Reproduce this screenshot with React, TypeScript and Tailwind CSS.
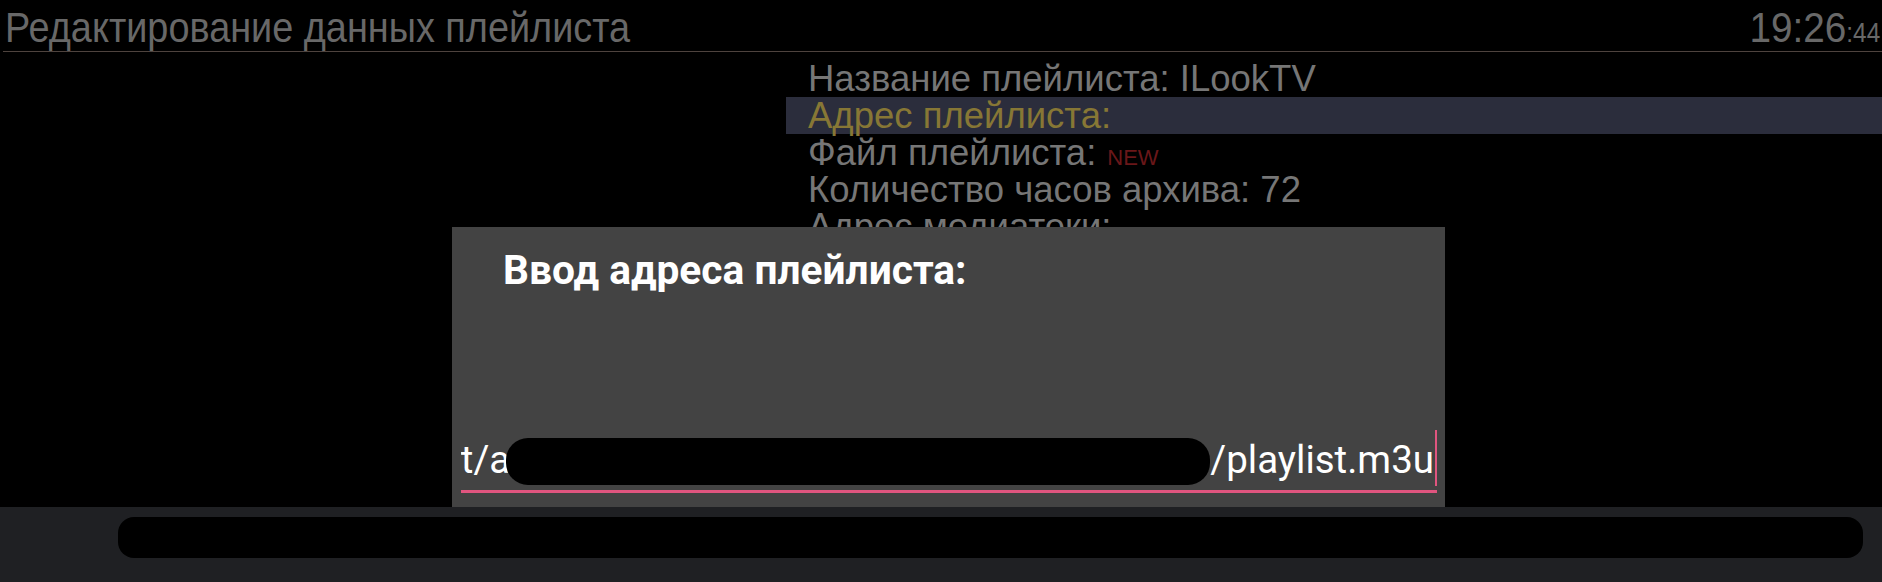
const narrow = "font-['Liberation_Sans_Narrow','Arial_Narrow','Liberation_Sans',sans-serif]";

const rows = [
  { label: 'Название плейлиста: ILookTV' },
  { label: 'Адрес плейлиста:', active: true },
  { label: 'Файл плейлиста:', badge: 'NEW' },
  { label: 'Количество часов архива: 72' },
  { label: 'Адрес медиатеки:' },
  { label: 'Часовой пояс: 0' },
  { label: 'Удалить плейлист' },
];

export default function App() {
  return (
    <div className="relative w-[1882px] h-[582px] overflow-hidden bg-black flex flex-col">
      {/* шапка */}
      <header className={`h-[52px] shrink-0 ml-[3px] flex justify-between border-b border-[#4e433e] pt-[4px] ${narrow}`}>
        <h1 className="pl-[2px] text-[43px] leading-[46px] text-[#686868] whitespace-nowrap">
          <span className="inline-block origin-left scale-x-[0.88]">Редактирование данных плейлиста</span>
        </h1>
        <div className="pr-[2px] text-[#686868] whitespace-nowrap">
          <div className="flex items-baseline origin-right scale-x-[0.9]">
            <span className="text-[43px] leading-[46px]">19:26</span>
            <span className="text-[27px] leading-[46px]">:44</span>
          </div>
        </div>
      </header>

      {/* список полей */}
      <ul className={`flex-1 min-h-0 overflow-hidden pt-[8px] ml-[786px] ${narrow}`}>
        {rows.map(r => (
          <li
            key={r.label}
            className={`h-[37px] pl-[22px] flex items-baseline gap-[11px] text-[36.5px] leading-[37px] whitespace-nowrap ${
              r.active ? 'bg-[#2b2d3c] text-[#877735]' : 'text-[#767676]'
            }`}
          >
            <span>{r.label}</span>
            {r.badge && <span className="text-[22px] text-[#6a1719]">{r.badge}</span>}
          </li>
        ))}
      </ul>

      {/* нижняя панель */}
      <div className="h-[75px] shrink-0 bg-[#1f2023] pt-[10px]">
        <div className="ml-[118px] w-[1745px] h-[41px] rounded-[16px] bg-black" />
      </div>

      {/* диалог ввода */}
      <div className="absolute left-[452px] top-[227px] w-[993px] h-[280px] bg-[#434343] flex flex-col font-['Roboto',sans-serif]">
        <h2 className="pl-[51px] pt-[21px] text-[40.7px] leading-[44px] font-bold text-white">Ввод адреса плейлиста:</h2>
        <div className="flex-1" />
        <div className="mx-[8px] ml-[9px] flex items-end justify-end h-[56px] overflow-hidden">
          <div className="flex items-center text-[38.5px] leading-[48px] text-white whitespace-nowrap mb-[1px]">
            <span>t/a</span>
            <span className="inline-block w-[704px] h-[47px] -ml-[4px] mt-[4px] rounded-[22px] bg-black" />
            <span>/playlist.m3u</span>
          </div>
          <span className="w-[2px] h-[57px] ml-[1px] bg-[#e0557f] shrink-0" />
          <div className="flex-1" />
        </div>
        <div className="mx-[8px] ml-[9px] mt-[4px] h-[3px] bg-[#e0557f]" />
        <div className="h-[14px]" />
      </div>
    </div>
  );
}
